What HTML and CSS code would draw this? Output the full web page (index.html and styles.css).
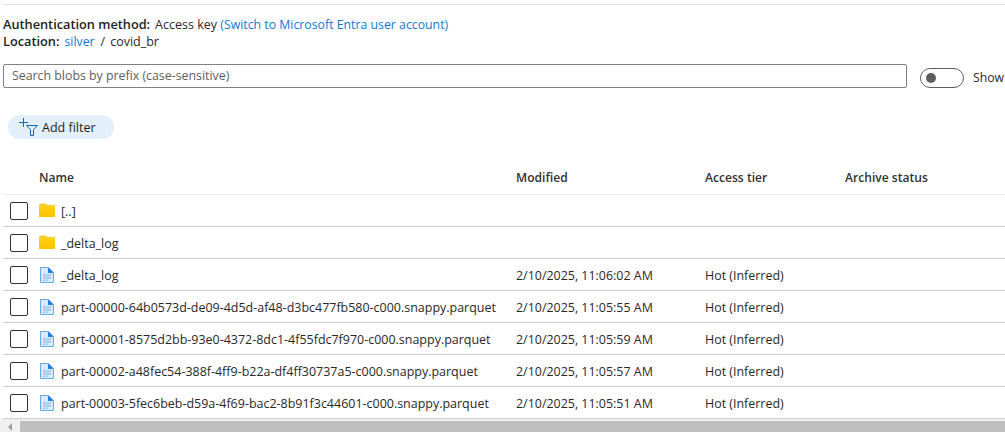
FILE: index.html
```html
<!DOCTYPE html>
<html lang="en">
<head>
<meta charset="utf-8">
<title>Blobs</title>
<link rel="stylesheet" href="styles.css">
</head>
<body>
<svg class="defs" width="0" height="0" aria-hidden="true">
  <defs>
    <linearGradient id="fold" x1="0" y1="0" x2="0" y2="1"><stop offset="0" stop-color="#ffd51f"/><stop offset="1" stop-color="#fdc000"/></linearGradient>
    <symbol id="folder" viewBox="0 0 16 16">
      <path d="M0 1.500C0 1 .4.500 1 .5h5.500c.4 0 .8.200 1 .5l.8 1H16v12H0z" fill="url(#fold)"/>
      <path d="M.8 1.300h5.800l.9 1.200H.8z" fill="#eec64c"/>
    </symbol>
    <symbol id="file" viewBox="0 0 16 16">
      <path d="M1.500.5h8l5 5v10h-13z" fill="#d9e9fa" stroke="#62a9ea"/>
      <path d="M9 .5l5.500 5.500H9z" fill="#1f7fd6"/>
      <path d="M4 7.500h8v1.500H4zM4 10h8v1.500H4zM4 12.500h5v1.200H4z" fill="#93c3ef"/>
    </symbol>
  </defs>
</svg>
<main class="page">
  <div class="topline"></div>
  <div class="info">
    <div><b>Authentication method:</b><span class="val">Access key</span> <a class="link">(Switch to Microsoft Entra user account)</a></div>
    <div><b>Location:</b><a class="link val">silver</a><span class="sep">/</span>covid_br</div>
  </div>
  <div class="searchrow">
    <div class="search">Search blobs by prefix (case-sensitive)</div>
    <div class="toggle"><span class="knob"></span></div>
    <span class="show">Show</span>
  </div>
  <div class="filterrow">
    <button class="pill">
      <svg class="pillicon" width="20" height="18" viewBox="0 0 20 18" fill="none">
        <path d="M0 4.500h9M4.500 0v9" stroke="#0f6cbd"/>
        <path d="M7.500 7.500h11l-4 4.200v5.800h-3v-5.800z" stroke="#0f6cbd"/>
      </svg>
      Add filter
    </button>
  </div>
  <div class="table">
    <div class="row head"><span></span><span>Name</span><span>Modified</span><span>Access tier</span><span>Archive status</span></div>
    <div class="row first"><i class="cb"></i><span class="name"><svg class="ic"><use href="#folder"/></svg>[..]</span><span></span><span></span><span></span></div>
    <div class="row"><i class="cb"></i><span class="name"><svg class="ic"><use href="#folder"/></svg>_delta_log</span><span></span><span></span><span></span></div>
    <div class="row"><i class="cb"></i><span class="name"><svg class="ic"><use href="#file"/></svg>_delta_log</span><span class="cell">2/10/2025, 11:06:02 AM</span><span class="cell">Hot (Inferred)</span><span></span></div>
    <div class="row"><i class="cb"></i><span class="name"><svg class="ic"><use href="#file"/></svg>part-00000-64b0573d-de09-4d5d-af48-d3bc477fb580-c000.snappy.parquet</span><span class="cell">2/10/2025, 11:05:55 AM</span><span class="cell">Hot (Inferred)</span><span></span></div>
    <div class="row"><i class="cb"></i><span class="name"><svg class="ic"><use href="#file"/></svg>part-00001-8575d2bb-93e0-4372-8dc1-4f55fdc7f970-c000.snappy.parquet</span><span class="cell">2/10/2025, 11:05:59 AM</span><span class="cell">Hot (Inferred)</span><span></span></div>
    <div class="row"><i class="cb"></i><span class="name"><svg class="ic"><use href="#file"/></svg>part-00002-a48fec54-388f-4ff9-b22a-df4ff30737a5-c000.snappy.parquet</span><span class="cell">2/10/2025, 11:05:57 AM</span><span class="cell">Hot (Inferred)</span><span></span></div>
    <div class="row"><i class="cb"></i><span class="name"><svg class="ic"><use href="#file"/></svg>part-00003-5fec6beb-d59a-4f69-bac2-8b91f3c44601-c000.snappy.parquet</span><span class="cell">2/10/2025, 11:05:51 AM</span><span class="cell">Hot (Inferred)</span><span></span></div>
  </div>
  <div class="scrollbar">
    <div class="arrowbox"><span class="arrow"></span></div>
    <div class="thumb"></div>
  </div>
</main>
</body>
</html>
```
FILE: styles.css
```css
html, body {
  margin: 0;
  padding: 0;
  height: 432px;
  overflow: hidden;
  background: #fff;
}
body {
  font-family: "Open Sans", "Noto Sans", sans-serif;
  font-size: 12.25px;
  color: #292827;
}
.defs { position: absolute; }
.page {
  width: 1005px;
  height: 432px;
  overflow: hidden;
  padding-top: 4px;
  box-sizing: border-box;
}
.topline {
  height: 1px;
  margin-left: 3px;
  background: #dcdcdc;
}
.info {
  margin: 11px 0 0 3px;
  font-size: 12.5px;
  line-height: 17px;
}
.info b { font-weight: 600; color: #201f1e; font-size: 12.75px; }
.val { margin-left: 5px; }
.link { color: #0f78d4; font-size: 12.3px; }
.sep { margin: 0 5px 0 6px; }
.searchrow {
  display: flex;
  align-items: center;
  margin: 14px 0 0 3px;
  white-space: nowrap;
}
.search {
  flex: none;
  width: 894px;
  height: 22px;
  border: 1px solid #808080;
  border-radius: 2px;
  padding-left: 8px;
  line-height: 22px;
  color: #605e5c;
  font-size: 12.35px;
}
.toggle {
  flex: none;
  box-sizing: border-box;
  width: 44px;
  height: 20px;
  margin: 3px 0 0 13px;
  border: 1px solid #605e5c;
  border-radius: 10px;
  display: flex;
  align-items: center;
  padding-left: 5px;
}
.knob {
  width: 10px;
  height: 10px;
  border-radius: 50%;
  background: #605e5c;
}
.show { margin: 3px 0 0 9px; }
.filterrow {
  margin: 27px 0 0 8px;
}
.pill {
  display: flex;
  align-items: center;
  width: 106px;
  height: 24px;
  padding: 0 0 0 11px;
  border: 0;
  border-radius: 12px;
  background: #e3f0fb;
  font: inherit;
  font-size: 12.5px;
  color: #201f1e;
  white-space: nowrap;
}
.pillicon { margin: 0 3px 0 0; flex: none; }
.table {
  margin: 24px 0 0 3px;
}
.row {
  display: grid;
  grid-template-columns: 36px 477px 189px 140px 1fr;
  align-items: center;
  height: 32px;
  border-bottom: 1px solid #cfcfcf;
  box-sizing: border-box;
  white-space: nowrap;
}
.cell { font-size: 12.45px; padding-top: 1px; }
.row.head {
  border-bottom-color: #ebebeb;
  font-weight: 600;
  color: #323130;
  font-size: 12.1px;
  padding-bottom: 2px;
}
.cb {
  display: block;
  width: 16px;
  height: 16px;
  margin-left: 7px;
  border: 1px solid #323130;
  border-radius: 2px;
}
.name {
  display: flex;
  align-items: center;
  font-size: 12.48px;
  padding-top: 1px;
}
.ic {
  width: 16px;
  height: 16px;
  margin-right: 6px;
  flex: none;
}
.scrollbar {
  display: flex;
  height: 13px;
  box-sizing: border-box;
  padding-top: 2px;
  background: #f0f0f0;
}
.arrowbox {
  width: 20px;
  display: flex;
  align-items: center;
  padding-left: 8px;
  box-sizing: border-box;
}
.arrow {
  width: 0;
  height: 0;
  border-style: solid;
  border-width: 4px 4px 4px 0;
  border-color: transparent #a0a0a0 transparent transparent;
}
.thumb {
  flex: 1;
  background: #bfbfbf;
}
```
